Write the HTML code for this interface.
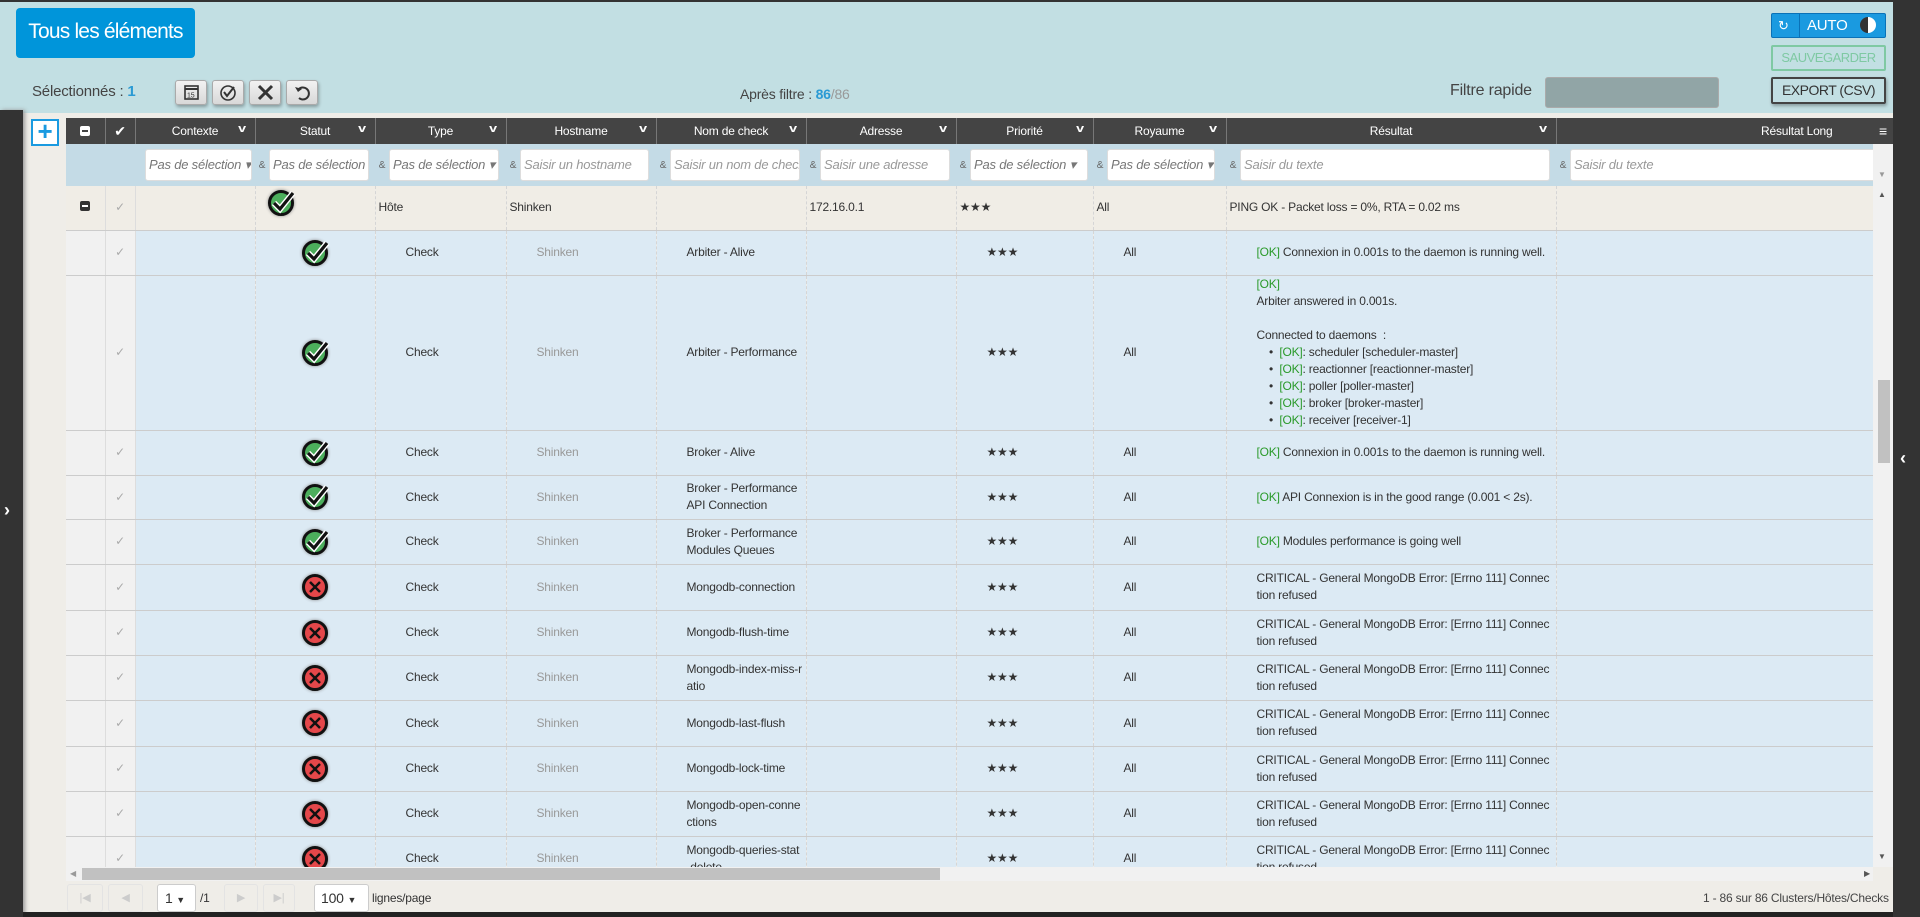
<!DOCTYPE html>
<html><head><meta charset="utf-8">
<style>
*{box-sizing:border-box;margin:0;padding:0}
body{width:1920px;height:917px;overflow:hidden;background:#efede8;font-family:"Liberation Sans",sans-serif;font-size:12px;color:#333;position:relative;letter-spacing:-0.2px}
.abs{position:absolute}
table{border-collapse:collapse;table-layout:fixed;position:absolute;left:66px}
td,th{overflow:hidden;white-space:nowrap;vertical-align:middle}
.hd th{background:#444;color:#fff;font-weight:normal;font-size:12px;height:26px;border-right:1px solid #777;position:relative;text-align:center}
.hd th .ch{position:absolute;right:10px;top:5px;font-size:11px;font-weight:bold;transform:scaleX(1.3)}
.fl td{background:#c4dbe6;height:42px;padding:0 3px 0 0;font-size:11px;color:#555}
.fl .amp{display:inline-block;width:14px;text-align:center;color:#666;font-size:10px}
.fl .in{display:inline-block;vertical-align:middle;height:32px;background:#fff;border:1px solid #ddd;border-radius:3px;color:#999;font-style:italic;font-size:13px;line-height:30px;padding-left:3px;overflow:hidden;white-space:nowrap}
.fl .in.sel{color:#777}
.bd td{border-bottom:1px solid #ccc;border-right:1px dashed #d5d5d5;background:#dceaf4;line-height:17px;padding-left:30px;font-size:12px}
.bd td.c0,.bd td.c1{background:#f1f1f1;border-right:1px solid #ddd;padding:0;text-align:center;color:#aaa}
.bd td.c2{padding:0}
.bd td.st{padding:0;text-align:center}
.bd tr.host td{background:#f0ede6;padding-left:3px}
.bd tr.host td.c0,.bd tr.host td.c1{background:#f0ede6;padding:0}
.g{color:#2a9a2a}
.gr{color:#999}
.ok,.ko{display:inline-block;width:26px;height:26px;border-radius:50%;border:3px solid #111;position:relative;vertical-align:middle;box-shadow:0 0 3px #888}
.ok{background:#4cae5c}
.ko{background:#e4474a}
.ok svg,.ko svg{position:absolute;left:-3px;top:-5px}
.btn{position:absolute;background:linear-gradient(#f2f2f2,#d8d8d8);border:1px solid #aaa;border-radius:3px;box-shadow:1px 2px 3px rgba(0,0,0,.3)}
</style></head><body>
<div class="abs" style="left:0;top:0;width:1920px;height:113px;background:#c2dfe3"></div>
<div class="abs" style="left:0;top:0;width:1893px;height:2px;background:#333"></div>
<div class="abs" style="left:0;top:110px;width:23px;height:807px;background:#333;box-shadow:2px 0 4px #999"></div>
<div class="abs" style="left:4px;top:500px;color:#fff;font-size:18px;font-weight:bold">›</div>
<div class="abs" style="left:1893px;top:0;width:27px;height:917px;background:#333"></div>
<div class="abs" style="left:1900px;top:448px;color:#fff;font-size:18px;font-weight:bold">‹</div>
<div class="abs" style="left:23px;top:912px;width:1870px;height:5px;background:#222"></div>

<div class="abs" style="left:16px;top:8px;width:179px;height:50px;background:#0095da;border-radius:4px;color:#fff;font-size:21px;letter-spacing:-0.8px;line-height:48px;text-align:center;white-space:nowrap">Tous les éléments</div>
<div class="abs" style="left:32px;top:83px;font-size:15px;color:#444">Sélectionnés : <b style="color:#2a9ad4">1</b></div>
<div class="btn" style="left:175px;top:80px;width:32px;height:25px"><svg width="30" height="23"><rect x="9" y="5" width="13" height="13" fill="none" stroke="#333" stroke-width="1.6"/><line x1="9" y1="8" x2="22" y2="8" stroke="#333" stroke-width="2"/><text x="11" y="16.5" font-size="7" font-family="Liberation Sans" fill="#333">15</text></svg></div>
<div class="btn" style="left:212px;top:80px;width:32px;height:25px"><svg width="30" height="23"><circle cx="15" cy="12" r="7" fill="none" stroke="#333" stroke-width="1.6"/><path d="M11 11l3 4 7-9" fill="none" stroke="#333" stroke-width="2"/></svg></div>
<div class="btn" style="left:249px;top:80px;width:32px;height:25px"><svg width="30" height="23"><path d="M9 5l13 13M22 5l-13 13" stroke="#333" stroke-width="3"/></svg></div>
<div class="btn" style="left:286px;top:80px;width:32px;height:25px"><svg width="30" height="23"><path d="M11 9a6 6 0 1 1 1 8" fill="none" stroke="#333" stroke-width="2"/><path d="M8 6l3 5 4-3z" fill="#333"/></svg></div>
<div class="abs" style="left:740px;top:86px;font-size:14px;color:#444">Après filtre : <b style="color:#2a9ad4">86</b><span style="color:#999">/86</span></div>
<div class="abs" style="left:1450px;top:82px;font-size:16px;color:#444">Filtre rapide</div>
<div class="abs" style="left:1545px;top:77px;width:174px;height:31px;background:#91a5a6;border:1px solid #aaa;border-radius:3px"></div>
<div class="abs" style="left:1771px;top:13px;width:115px;height:25px;background:#1a9ae0;border:1px solid #0a72b8;border-radius:2px;color:#fff;font-size:15px;line-height:23px"><span style="position:absolute;left:6px;font-size:13px">↻</span><span style="position:absolute;left:27px;top:0;height:23px;border-left:1px solid #0a72b8"></span><span style="position:absolute;left:35px">AUTO</span><span style="position:absolute;left:88px;top:3px;width:16px;height:16px;border-radius:50%;background:linear-gradient(90deg,#333 50%,#fff 50%)"></span></div>
<div class="abs" style="left:1771px;top:45px;width:115px;height:26px;border:2px solid #7fc9a3;border-radius:2px;color:#7fc9a3;font-size:13px;letter-spacing:-0.5px;line-height:22px;text-align:center;white-space:nowrap">SAUVEGARDER</div>
<div class="abs" style="left:1771px;top:77px;width:115px;height:27px;border:2px solid #444;border-radius:2px;color:#333;font-size:14px;letter-spacing:-0.5px;line-height:23px;text-align:center;box-shadow:1px 2px 3px rgba(0,0,0,.3)">EXPORT (CSV)</div>

<div class="abs" style="left:31px;top:119px;width:28px;height:27px;border:2px solid #1a9ae0;background:#fff;color:#1a9ae0;font-size:26px;line-height:21px;text-align:center;font-weight:bold">+</div>

<table class="hd" style="top:118px;width:1807px">
<colgroup><col width="39"><col width="30"><col width="120"><col width="120"><col width="131"><col width="150"><col width="150"><col width="150"><col width="137"><col width="133"><col width="330"><col width="317"></colgroup>
<tr><th><span style="display:inline-block;width:10px;height:10px;background:#fff;border-radius:2px;position:relative;top:1px"><span style="position:absolute;left:2px;top:4px;width:6px;height:2px;background:#444"></span></span></th><th style="font-size:14px">✔</th><th>Contexte<span class="ch">v</span></th><th>Statut<span class="ch">v</span></th><th>Type<span class="ch">v</span></th><th>Hostname<span class="ch">v</span></th><th>Nom de check<span class="ch">v</span></th><th>Adresse<span class="ch">v</span></th><th>Priorité<span class="ch">v</span></th><th>Royaume<span class="ch">v</span></th><th>Résultat<span class="ch">v</span></th><th style="text-align:right;padding-right:40px">Résultat Long</th></tr>
</table>
<div class="abs" style="left:1873px;top:118px;width:20px;height:26px;background:#444;color:#fff;font-size:14px;text-align:center;line-height:26px">≡</div>

<table class="fl" style="top:144px;width:1807px">
<colgroup><col width="39"><col width="30"><col width="120"><col width="120"><col width="131"><col width="150"><col width="150"><col width="150"><col width="137"><col width="133"><col width="330"><col width="317"></colgroup>
<tr><td></td><td></td>
<td style="padding-left:10px"><span class="in sel" style="width:107px">Pas de sélection ▾</span></td>
<td><span class="amp">&amp;</span><span class="in sel" style="width:100px">Pas de sélection ▾</span></td>
<td><span class="amp">&amp;</span><span class="in sel" style="width:110px">Pas de sélection ▾</span></td>
<td><span class="amp">&amp;</span><span class="in" style="width:129px">Saisir un hostname</span></td>
<td><span class="amp">&amp;</span><span class="in" style="width:130px">Saisir un nom de check</span></td>
<td><span class="amp">&amp;</span><span class="in" style="width:130px">Saisir une adresse</span></td>
<td><span class="amp">&amp;</span><span class="in sel" style="width:118px">Pas de sélection ▾</span></td>
<td><span class="amp">&amp;</span><span class="in sel" style="width:108px">Pas de sélection ▾</span></td>
<td><span class="amp">&amp;</span><span class="in" style="width:310px">Saisir du texte</span></td>
<td><span class="amp">&amp;</span><span class="in" style="width:310px">Saisir du texte</span></td></tr>
</table>

<div class="abs" style="left:66px;top:186px;width:1807px;height:681px;overflow:hidden">
<table class="bd" style="left:0;top:0;width:1807px">
<colgroup><col width="39"><col width="30"><col width="120"><col width="120"><col width="131"><col width="150"><col width="150"><col width="150"><col width="137"><col width="133"><col width="330"><col width="317"></colgroup>
<tr class="host" style="height:44px"><td class="c0"><span style="display:inline-block;width:10px;height:10px;background:#333;border-radius:2px;position:relative"><span style="position:absolute;left:2px;top:4px;width:6px;height:2px;background:#fff"></span></span></td><td class="c1">✓</td><td class="c2"></td><td class="st" style="text-align:left;padding-left:12px;vertical-align:top;padding-top:4px"><span class="ok"><svg width="30" height="30"><path d="M6 15l6 6 13-16" fill="none" stroke="#fff" stroke-width="6"/><path d="M6 15l6 6 13-16" fill="none" stroke="#111" stroke-width="3.2"/></svg></span></td><td>Hôte</td><td>Shinken</td><td></td><td>172.16.0.1</td><td>★★★</td><td>All</td><td>PING OK - Packet loss = 0%, RTA = 0.02 ms</td><td></td></tr>
<tr style="height:45px"><td class="c0"></td><td class="c1">✓</td><td class="c2"></td><td class="st"><span class="ok"><svg width="30" height="30"><path d="M6 15l6 6 13-16" fill="none" stroke="#fff" stroke-width="6"/><path d="M6 15l6 6 13-16" fill="none" stroke="#111" stroke-width="3.2"/></svg></span></td><td>Check</td><td class="gr">Shinken</td><td>Arbiter - Alive</td><td></td><td>★★★</td><td>All</td><td><span class="g">[OK]</span> Connexion in 0.001s to the daemon is running well.</td><td></td></tr>
<tr style="height:155px"><td class="c0"></td><td class="c1">✓</td><td class="c2"></td><td class="st"><span class="ok"><svg width="30" height="30"><path d="M6 15l6 6 13-16" fill="none" stroke="#fff" stroke-width="6"/><path d="M6 15l6 6 13-16" fill="none" stroke="#111" stroke-width="3.2"/></svg></span></td><td>Check</td><td class="gr">Shinken</td><td>Arbiter - Performance</td><td></td><td>★★★</td><td>All</td><td><span class="g">[OK]</span><br>Arbiter answered in 0.001s.<br><br>Connected to daemons &nbsp;:<br>&nbsp;&nbsp;&nbsp;&nbsp;•&nbsp;&nbsp;<span class="g">[OK]</span>: scheduler [scheduler-master]<br>&nbsp;&nbsp;&nbsp;&nbsp;•&nbsp;&nbsp;<span class="g">[OK]</span>: reactionner [reactionner-master]<br>&nbsp;&nbsp;&nbsp;&nbsp;•&nbsp;&nbsp;<span class="g">[OK]</span>: poller [poller-master]<br>&nbsp;&nbsp;&nbsp;&nbsp;•&nbsp;&nbsp;<span class="g">[OK]</span>: broker [broker-master]<br>&nbsp;&nbsp;&nbsp;&nbsp;•&nbsp;&nbsp;<span class="g">[OK]</span>: receiver [receiver-1]</td><td></td></tr>
<tr style="height:45px"><td class="c0"></td><td class="c1">✓</td><td class="c2"></td><td class="st"><span class="ok"><svg width="30" height="30"><path d="M6 15l6 6 13-16" fill="none" stroke="#fff" stroke-width="6"/><path d="M6 15l6 6 13-16" fill="none" stroke="#111" stroke-width="3.2"/></svg></span></td><td>Check</td><td class="gr">Shinken</td><td>Broker - Alive</td><td></td><td>★★★</td><td>All</td><td><span class="g">[OK]</span> Connexion in 0.001s to the daemon is running well.</td><td></td></tr>
<tr style="height:44px"><td class="c0"></td><td class="c1">✓</td><td class="c2"></td><td class="st"><span class="ok"><svg width="30" height="30"><path d="M6 15l6 6 13-16" fill="none" stroke="#fff" stroke-width="6"/><path d="M6 15l6 6 13-16" fill="none" stroke="#111" stroke-width="3.2"/></svg></span></td><td>Check</td><td class="gr">Shinken</td><td>Broker - Performance<br>API Connection</td><td></td><td>★★★</td><td>All</td><td><span class="g">[OK]</span> API Connexion is in the good range (0.001 &lt; 2s).</td><td></td></tr>
<tr style="height:45px"><td class="c0"></td><td class="c1">✓</td><td class="c2"></td><td class="st"><span class="ok"><svg width="30" height="30"><path d="M6 15l6 6 13-16" fill="none" stroke="#fff" stroke-width="6"/><path d="M6 15l6 6 13-16" fill="none" stroke="#111" stroke-width="3.2"/></svg></span></td><td>Check</td><td class="gr">Shinken</td><td>Broker - Performance<br>Modules Queues</td><td></td><td>★★★</td><td>All</td><td><span class="g">[OK]</span> Modules performance is going well</td><td></td></tr>
<tr style="height:46px"><td class="c0"></td><td class="c1">✓</td><td class="c2"></td><td class="st"><span class="ko"><svg width="26" height="30"><path d="M8 10l10 10M18 10l-10 10" stroke="#111" stroke-width="2.5"/></svg></span></td><td>Check</td><td class="gr">Shinken</td><td>Mongodb-connection</td><td></td><td>★★★</td><td>All</td><td>CRITICAL - General MongoDB Error: [Errno 111] Connec<br>tion refused</td><td></td></tr>
<tr style="height:45px"><td class="c0"></td><td class="c1">✓</td><td class="c2"></td><td class="st"><span class="ko"><svg width="26" height="30"><path d="M8 10l10 10M18 10l-10 10" stroke="#111" stroke-width="2.5"/></svg></span></td><td>Check</td><td class="gr">Shinken</td><td>Mongodb-flush-time</td><td></td><td>★★★</td><td>All</td><td>CRITICAL - General MongoDB Error: [Errno 111] Connec<br>tion refused</td><td></td></tr>
<tr style="height:45px"><td class="c0"></td><td class="c1">✓</td><td class="c2"></td><td class="st"><span class="ko"><svg width="26" height="30"><path d="M8 10l10 10M18 10l-10 10" stroke="#111" stroke-width="2.5"/></svg></span></td><td>Check</td><td class="gr">Shinken</td><td>Mongodb-index-miss-r<br>atio</td><td></td><td>★★★</td><td>All</td><td>CRITICAL - General MongoDB Error: [Errno 111] Connec<br>tion refused</td><td></td></tr>
<tr style="height:46px"><td class="c0"></td><td class="c1">✓</td><td class="c2"></td><td class="st"><span class="ko"><svg width="26" height="30"><path d="M8 10l10 10M18 10l-10 10" stroke="#111" stroke-width="2.5"/></svg></span></td><td>Check</td><td class="gr">Shinken</td><td>Mongodb-last-flush</td><td></td><td>★★★</td><td>All</td><td>CRITICAL - General MongoDB Error: [Errno 111] Connec<br>tion refused</td><td></td></tr>
<tr style="height:45px"><td class="c0"></td><td class="c1">✓</td><td class="c2"></td><td class="st"><span class="ko"><svg width="26" height="30"><path d="M8 10l10 10M18 10l-10 10" stroke="#111" stroke-width="2.5"/></svg></span></td><td>Check</td><td class="gr">Shinken</td><td>Mongodb-lock-time</td><td></td><td>★★★</td><td>All</td><td>CRITICAL - General MongoDB Error: [Errno 111] Connec<br>tion refused</td><td></td></tr>
<tr style="height:45px"><td class="c0"></td><td class="c1">✓</td><td class="c2"></td><td class="st"><span class="ko"><svg width="26" height="30"><path d="M8 10l10 10M18 10l-10 10" stroke="#111" stroke-width="2.5"/></svg></span></td><td>Check</td><td class="gr">Shinken</td><td>Mongodb-open-conne<br>ctions</td><td></td><td>★★★</td><td>All</td><td>CRITICAL - General MongoDB Error: [Errno 111] Connec<br>tion refused</td><td></td></tr>
<tr style="height:45px"><td class="c0"></td><td class="c1">✓</td><td class="c2"></td><td class="st"><span class="ko"><svg width="26" height="30"><path d="M8 10l10 10M18 10l-10 10" stroke="#111" stroke-width="2.5"/></svg></span></td><td>Check</td><td class="gr">Shinken</td><td>Mongodb-queries-stat<br>-delete</td><td></td><td>★★★</td><td>All</td><td>CRITICAL - General MongoDB Error: [Errno 111] Connec<br>tion refused</td><td></td></tr>
</table>
</div>
<div class="abs" style="left:1873px;top:144px;width:20px;height:723px;background:#f1f1f1"></div>
<div class="abs" style="left:1878px;top:170px;font-size:8px;color:#999">▼</div>
<div class="abs" style="left:1878px;top:190px;font-size:8px;color:#555">▲</div>
<div class="abs" style="left:1878px;top:380px;width:12px;height:83px;background:#c1c1c1"></div>
<div class="abs" style="left:1878px;top:852px;font-size:8px;color:#555">▼</div>
<div class="abs" style="left:66px;top:867px;width:1807px;height:14px;background:#f1f1f1"></div>
<div class="abs" style="left:82px;top:868px;width:858px;height:12px;background:#c1c1c1"></div>
<div class="abs" style="left:70px;top:869px;font-size:8px;color:#999">◀</div>
<div class="abs" style="left:1864px;top:869px;font-size:8px;color:#555">▶</div>
<div class="abs" style="left:67px;top:884px;width:36px;height:28px;border:1px solid #e3e3e3;border-radius:3px;color:#ccc;text-align:center;line-height:26px;font-size:11px">|◀</div>
<div class="abs" style="left:108px;top:884px;width:35px;height:28px;border:1px solid #e3e3e3;border-radius:3px;color:#ccc;text-align:center;line-height:26px;font-size:11px">◀</div>
<div class="abs" style="left:157px;top:884px;width:39px;height:28px;border:1px solid #ccc;border-radius:3px;background:#fff;font-size:14px;line-height:26px;padding-left:7px">1 <span style="font-size:9px">▼</span></div>
<div class="abs" style="left:200px;top:891px;font-size:12px">/1</div>
<div class="abs" style="left:224px;top:884px;width:34px;height:28px;border:1px solid #e3e3e3;border-radius:3px;color:#ccc;text-align:center;line-height:26px;font-size:11px">▶</div>
<div class="abs" style="left:263px;top:884px;width:32px;height:28px;border:1px solid #e3e3e3;border-radius:3px;color:#ccc;text-align:center;line-height:26px;font-size:11px">▶|</div>
<div class="abs" style="left:314px;top:884px;width:55px;height:28px;border:1px solid #ccc;border-radius:3px;background:#fff;font-size:14px;line-height:26px;padding-left:6px">100 <span style="font-size:9px">▼</span></div>
<div class="abs" style="left:372px;top:891px;font-size:12px">lignes/page</div>
<div class="abs" style="left:1703px;top:891px;font-size:12px;color:#444">1 - 86 sur 86 Clusters/Hôtes/Checks</div>
</body></html>
